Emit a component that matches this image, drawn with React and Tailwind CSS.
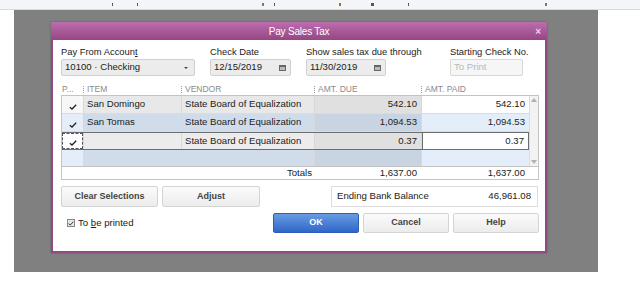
import React from "react";

const F = { fontFamily: '"Liberation Sans", Arial, sans-serif' };

function Check() {
  return (
    <svg width="8" height="6" viewBox="0 0 8 6" className="block">
      <path d="M0.8 3.2 L3 5 L7.2 0.8" stroke="#222" strokeWidth="1.3" fill="none" />
    </svg>
  );
}

function Sep() {
  return <span className="inline-block w-px h-[7px] border-l border-dotted border-[#999] mr-[3px]" />;
}

function CalIcon() {
  return (
    <svg width="7" height="6" viewBox="0 0 7 6" className="block">
      <rect x="0" y="0" width="7" height="6" fill="#666" />
      <rect x="1" y="2" width="5" height="3" fill="#bbb" />
    </svg>
  );
}

const rows = [
  { item: "San Domingo", due: "542.10", paid: "542.10", kind: "gray" },
  { item: "San Tomas", due: "1,094.53", paid: "1,094.53", kind: "blue" },
  { item: "", due: "0.37", paid: "0.37", kind: "sel" },
  { item: "", due: "", paid: "", kind: "blue", empty: true },
];

export default function App() {
  return (
    <div className="w-[640px] h-[287px] bg-white overflow-hidden text-[#222]" style={F}>
      <div className="h-[10px] bg-[#f3f5f9] border-b border-[#d6dce4] flex items-center">
        <span className="ml-[112px] w-px h-[3px] bg-[#555]" />
        <span className="ml-[24px] w-px h-[3px] bg-[#555]" />
        <span className="ml-[124px] w-[2px] h-[3px] bg-[#777]" />
        <span className="ml-[10px] w-px h-[3px] bg-[#555]" />
        <span className="ml-[64px] w-[2px] h-[3px] bg-[#a07020]" />
        <span className="ml-[30px] w-[3px] h-[3px] bg-[#555]" />
        <span className="ml-[34px] w-px h-[3px] bg-[#555]" />
        <span className="ml-[136px] w-[2px] h-[3px] bg-[#777]" />
      </div>
      <div className="ml-[14px] w-[584px] h-[262px] bg-[#808080] pt-[12px] pl-[37px]">
        <div className="w-[496px] h-[231px] flex flex-col shadow-[0_0_2px_rgba(0,0,0,0.3)]">
          <div className="h-[18px] bg-gradient-to-b from-[#bb6dae] to-[#964682] rounded-t-[2px] flex items-center justify-center relative">
            <span className="text-white text-[10px] tracking-[-0.2px]">Pay Sales Tax</span>
            <span className="absolute right-[6px] top-[2px] text-[#e8d4e4] text-[10px] font-bold">×</span>
          </div>
          <div className="flex-1 bg-white border-x-2 border-b-2 border-[#8f4a86] pl-[8px] pr-[6px] pt-[6px] text-[9.6px]">
            {/* labels */}
            <div className="flex h-[12px] items-center text-[9.4px]">
              <div className="w-[149px]">Pay From Accoun<span className="underline">t</span></div>
              <div className="w-[96px]">Check Date</div>
              <div className="w-[144px]">Show sales tax due through</div>
              <div>Starting Check No.</div>
            </div>
            {/* inputs */}
            <div className="flex h-[17px] mt-[1px]">
              <div className="w-[134px] bg-[#ececec] border border-[#d0d0d0] rounded-[2px] flex items-center justify-between pl-[3px] pr-[6px]">
                <span>10100 · Checking</span>
                <span className="w-0 h-0 border-l-[2px] border-r-[2px] border-t-[2px] border-l-transparent border-r-transparent border-t-[#444]" />
              </div>
              <div className="w-[81px] ml-[15px] bg-[#ececec] border border-[#d0d0d0] rounded-[2px] flex items-center justify-between pl-[3px] pr-[4px]">
                <span>12/15/2019</span>
                <CalIcon />
              </div>
              <div className="w-[80px] ml-[15px] bg-[#ececec] border border-[#d0d0d0] rounded-[2px] flex items-center justify-between pl-[3px] pr-[4px]">
                <span>11/30/2019</span>
                <CalIcon />
              </div>
              <div className="w-[73px] ml-[64px] bg-[#f6f6f6] border border-[#d8d8d8] rounded-[2px] flex items-center pl-[3px] text-[#b8b8b8]">
                To Print
              </div>
            </div>
            {/* header */}
            <div className="flex h-[12px] mt-[7px] items-center text-[8.5px] text-[#8a8a8a] uppercase">
              <div className="w-[22px] pl-[1px]">P...</div>
              <div className="w-[98px] flex items-center"><Sep />ITEM</div>
              <div className="w-[133px] flex items-center"><Sep />VENDOR</div>
              <div className="w-[107px] flex items-center"><Sep />AMT. DUE</div>
              <div className="flex items-center"><Sep />AMT. PAID</div>
            </div>
            {/* table */}
            <div className="w-[478px] border border-[#c4c4c4] flex">
              <div className="w-[467px] flex flex-col">
                {rows.map((r, i) => {
                  const h = i === 3 ? "h-[16px]" : "h-[18px]";
                  const blue = r.kind === "blue";
                  const sel = r.kind === "sel";
                  const chk = blue ? "bg-[#e4edf9]" : "bg-[#f7f7f7]";
                  const mid = blue ? "bg-[#d0dcea]" : sel ? "bg-[#ececec]" : "bg-[#e8e8e8]";
                  const due = blue ? "bg-[#c9d4e2]" : "bg-[#e0e0e0]";
                  const paid = blue ? "bg-[#e4eefb]" : "bg-white";
                  return (
                    <div
                      key={i}
                      className={`flex ${h} ${sel ? "border-y border-[#6d6d6d]" : i < 3 ? "border-b border-[#dcdcdc]" : ""}`}
                    >
                      <div className={`w-[22px] ${chk} border-r border-[#d8d8d8] flex items-center justify-center`}>
                        {sel ? (
                          <div className="w-[21px] h-[16px] border border-dashed border-[#555] bg-white flex items-center justify-center">
                            <div className="pt-[3px]"><Check /></div>
                          </div>
                        ) : r.empty ? null : (
                          <div className="pt-[4px]"><Check /></div>
                        )}
                      </div>
                      <div className={`w-[98px] ${mid} border-r border-[#d8d8d8] pl-[3px] ${i === 1 ? "pt-[1px]" : "flex items-center"}`}>
                        {r.item}
                      </div>
                      <div className={`w-[133px] ${mid} border-r border-[#d8d8d8] pl-[3px] flex items-center`}>
                        {r.empty ? "" : "State Board of Equalization"}
                      </div>
                      <div className={`w-[107px] ${due} border-r border-[#d8d8d8] pr-[4px] flex items-center justify-end`}>
                        {r.due}
                      </div>
                      <div className={`flex-1 ${paid} pr-[4px] flex items-center justify-end ${sel ? "border border-[#6d6d6d] -my-px" : ""}`}>
                        {r.paid}
                      </div>
                    </div>
                  );
                })}
              </div>
              <div className="flex-1 bg-[#f2f2f2] border-l border-[#dcdcdc] flex flex-col items-center justify-between py-[2px]">
                <span className="w-0 h-0 border-l-[3px] border-r-[3px] border-b-[4px] border-l-transparent border-r-transparent border-b-[#b0b0b0]" />
                <span className="w-0 h-0 border-l-[3px] border-r-[3px] border-t-[4px] border-l-transparent border-r-transparent border-t-[#b0b0b0]" />
              </div>
            </div>
            {/* totals */}
            <div className="w-[478px] h-[13px] border-x border-b border-[#c4c4c4] flex items-center">
              <div className="w-[253px] text-right pr-[3px]">Totals</div>
              <div className="w-[107px] text-right pr-[5px]">1,637.00</div>
              <div className="w-[106px] text-right pr-[3px]">1,637.00</div>
            </div>
            {/* buttons row */}
            <div className="flex h-[21px] mt-[6px]">
              <div className="w-[97px] border border-[#d4d4d4] rounded-[2px] bg-gradient-to-b from-[#fbfbfb] to-[#ececec] flex items-center justify-center font-bold text-[9px] text-[#444]">
                Clear Selections
              </div>
              <div className="w-[98px] ml-[4px] border border-[#d4d4d4] rounded-[2px] bg-gradient-to-b from-[#fbfbfb] to-[#ececec] flex items-center justify-center font-bold text-[9px] text-[#444]">
                Ad<span className="underline">j</span>ust
              </div>
              <div className="w-[207px] ml-[71px] border border-[#dcdcdc] flex items-center justify-between pl-[5px] pr-[6px]">
                <span>Ending Bank Balance</span>
                <span>46,961.08</span>
              </div>
            </div>
            {/* bottom row */}
            <div className="flex h-[20px] mt-[6px]">
              <div className="w-[212px] flex items-center pl-[6px]">
                <div className="w-[8px] h-[8px] border border-[#888] bg-[#e8e8e8] flex items-center justify-center mr-[3px]">
                  <svg width="6" height="5" viewBox="0 0 6 5"><path d="M0.6 2.6 L2.3 4 L5.4 0.7" stroke="#333" strokeWidth="1" fill="none" /></svg>
                </div>
                <span>To <span className="underline">b</span>e printed</span>
              </div>
              <div className="w-[86px] rounded-[2px] border border-[#2d5fb8] bg-gradient-to-b from-[#6a9be2] to-[#2f66c9] flex items-center justify-center font-bold text-[9px] text-white">
                OK
              </div>
              <div className="w-[86px] ml-[4px] border border-[#d4d4d4] rounded-[2px] bg-gradient-to-b from-[#fbfbfb] to-[#ececec] flex items-center justify-center font-bold text-[9px] text-[#444]">
                Cancel
              </div>
              <div className="w-[86px] ml-[4px] border border-[#d4d4d4] rounded-[2px] bg-gradient-to-b from-[#fbfbfb] to-[#ececec] flex items-center justify-center font-bold text-[9px] text-[#444]">
                Help
              </div>
            </div>
          </div>
        </div>
      </div>
    </div>
  );
}
